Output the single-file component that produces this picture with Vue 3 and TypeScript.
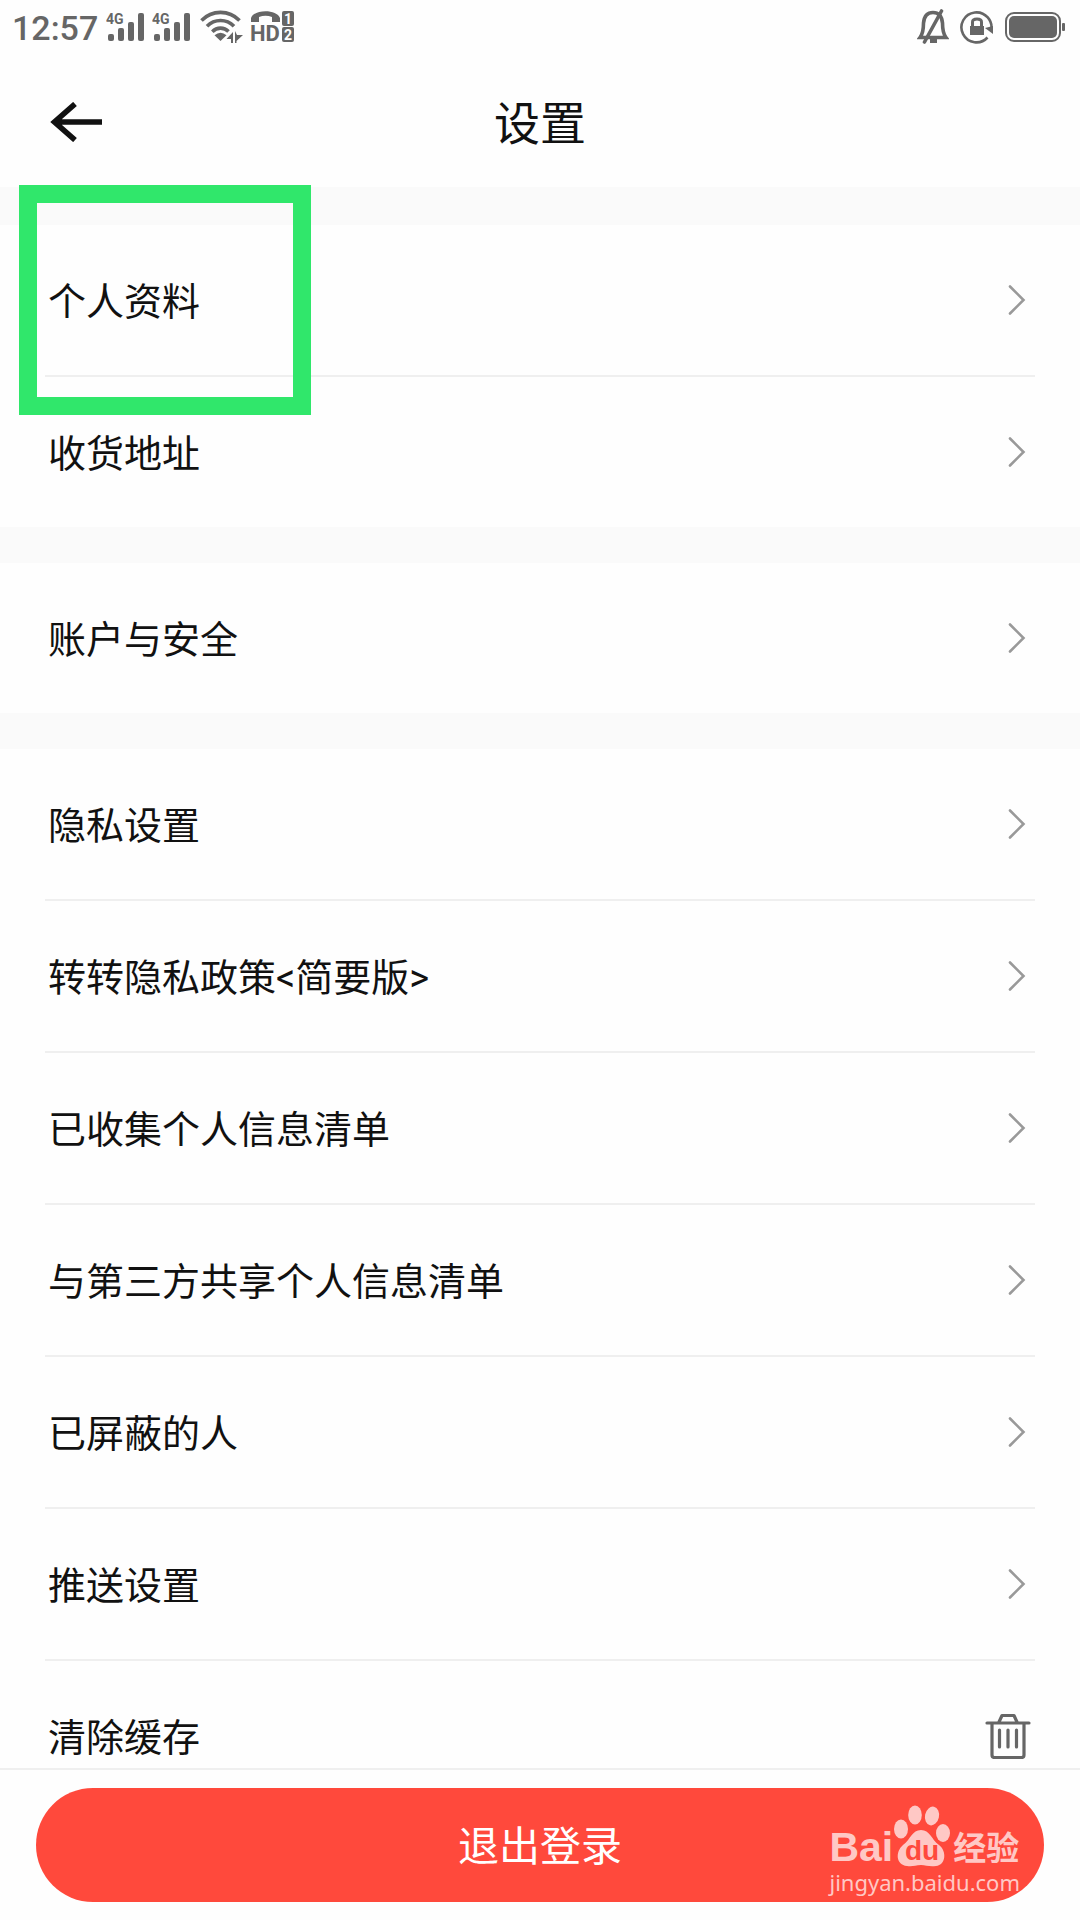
<script setup lang="ts">
interface Item {
  label: string
  icon: 'chevron' | 'trash'
}

const link = (label: string): Item => ({ label, icon: 'chevron' })

const groups: Item[][] = [
  [link('个人资料'), link('收货地址')],
  [link('账户与安全')],
  [
    link('隐私设置'),
    link('转转隐私政策<简要版>'),
    link('已收集个人信息清单'),
    link('与第三方共享个人信息清单'),
    link('已屏蔽的人'),
    link('推送设置'),
    { label: '清除缓存', icon: 'trash' },
  ],
]
</script>

<template>
  <div class="page">
    <div class="status">
      <span class="time">12:57</span>
      <svg v-for="n in 2" :key="n" class="signal" width="40" height="32" viewBox="0 0 40 32" fill="currentColor">
        <text x="0" y="13" class="tiny">4G</text>
        <rect x="2" y="23" width="6" height="7" rx="2" />
        <rect x="12" y="17" width="6" height="13" rx="2" />
        <rect x="22" y="11" width="6" height="19" rx="2" />
        <rect x="32" y="2" width="6" height="28" rx="2" />
      </svg>
      <svg class="wifi" width="44" height="34" viewBox="0 0 44 34" fill="none" stroke="currentColor" stroke-width="3.6">
        <path d="M1.5 10.500C12-.3 29-.3 39.500 10.500M7 16.200C14.500 8.600 26.500 8.600 34 16.200M12.300 21.700C17 17 24 17 28.500 21.500" />
        <path d="M14.500 25.300Q20.500 20.300 26.500 25.300L20.500 31Z" fill="currentColor" stroke="none" />
        <path d="M33 22V33H31V29H26.500ZM35 21V33H36.500V31L43 25H37Z" fill="currentColor" stroke="none" />
      </svg>
      <svg class="hd" width="46" height="42" viewBox="0 -4 46 42" fill="currentColor">
        <path d="M1 12V8C4-1 27-1 30 8V12H22V7Q15.500 4.500 9 7V12Z" />
        <text x="0" y="31" class="hd-text">HD</text>
        <rect x="32" y="1" width="12" height="15" rx="2" />
        <rect x="32" y="17" width="12" height="15" rx="2" />
        <text x="34" y="14" class="sim">1</text>
        <text x="34" y="30" class="sim">2</text>
      </svg>
      <span class="spacer"></span>
      <svg class="bell" width="32" height="36" viewBox="0 0 32 36" fill="none" stroke="currentColor" stroke-width="3.600">
        <path d="M3 28.500Q6.500 24 6.500 14Q7.500 3.500 16 3.500Q24.500 3.500 25.500 14Q25.500 24 29 28.500Z" />
        <path d="M24.500 2L7.500 33" stroke-linecap="round" />
        <path d="M14 31H19V33H14Z" stroke-width="2" />
      </svg>
      <svg class="lock" width="34" height="36" viewBox="0 0 34 36" fill="none" stroke="currentColor" stroke-width="2.600">
        <path d="M31 22A15 15 0 1 0 27.500 28.500" />
        <path d="M25 19L33 17V25Z" fill="currentColor" stroke="none" />
        <rect x="10" y="17" width="14" height="9" fill="currentColor" stroke="none" />
        <path d="M12.500 17V13Q12.500 10 17 10Q21.500 10 21.500 13V17" stroke-width="3" />
      </svg>
      <svg width="62" height="32" viewBox="0 0 62 32" fill="currentColor">
        <rect x="1" y="2" width="54" height="28" rx="8" fill="none" stroke="currentColor" stroke-width="2" />
        <rect x="4" y="5" width="48" height="22" rx="5" />
        <rect x="57" y="12" width="3" height="8" rx="1" />
      </svg>
    </div>

    <header class="header">
      <button type="button" class="back" aria-label="返回">
        <svg width="54" height="40" viewBox="0 0 54 40" fill="none" stroke="currentColor" stroke-width="5.600">
          <path d="M25 2L4.500 20L25 38M4.500 20H52" />
        </svg>
      </button>
      <h1>设置</h1>
    </header>

    <main class="list">
      <ul v-for="(group, g) in groups" :key="g" class="group">
        <li v-for="item in group" :key="item.label">
          <button type="button" class="row">
            <span class="label">{{ item.label }}</span>
            <svg v-if="item.icon === 'chevron'" width="24" height="32" viewBox="0 0 24 32" fill="none" stroke="#999" stroke-width="2.600" stroke-linecap="round">
              <path d="M3 2.500L16.500 16L3 29.500" />
            </svg>
            <svg v-else width="46" height="46" viewBox="0 0 46 46" fill="none" stroke="#666" stroke-width="3.200" stroke-linecap="round" stroke-linejoin="round">
              <path d="M2 10H44M14 9L17 2.500H29L32 9M7 11V42Q7 44.500 9.500 44.500H36.500Q39 44.500 39 42V11M14.500 17V34M23 17V34M31.500 17V34" />
            </svg>
          </button>
        </li>
      </ul>
    </main>

    <footer class="footer">
      <button type="button" class="logout">退出登录</button>
      <div class="mark">
        <div class="brand">
          <span class="bai">Bai</span>
          <svg width="58" height="64" viewBox="0 0 58 64" fill="currentColor">
            <ellipse cx="8" cy="26" rx="7" ry="9.500" />
            <ellipse cx="22" cy="12" rx="6.800" ry="9.500" />
            <ellipse cx="39" cy="13" rx="7" ry="9.500" transform="rotate(12 39 13)" />
            <ellipse cx="50" cy="30" rx="7" ry="9" />
            <path d="M28 27C37 27 38 36 46 42C54 48 53 62 43 63C36 64 33 62 28 62C22 62 20 64 14 63C3 62 2 49 10 42C18 36 19 27 28 27Z" />
            <text x="12" y="57" class="du">du</text>
          </svg>
          <span class="jy">经验</span>
        </div>
        <div class="url">jingyan.baidu.com</div>
      </div>
    </footer>

    <div class="highlight"></div>
  </div>
</template>

<style>
body {
  margin: 0;
  background: #fefefe;
}
</style>

<style scoped>
.page {
  position: relative;
  display: flex;
  flex-direction: column;
  height: 100vh;
  overflow: hidden;
  background: #fefefe;
  color: #111;
  font-family: Roboto, "Noto Sans CJK SC", sans-serif;
}

button {
  margin: 0;
  padding: 0;
  border: 0;
  background: none;
  color: inherit;
  font: inherit;
}

svg {
  display: block;
  flex: none;
}

.status {
  display: flex;
  flex: none;
  align-items: center;
  height: 54px;
  padding: 0 13px 0 12px;
  color: #666;
}

.time {
  width: 94px;
  padding-top: 2px;
  font-size: 34px;
  font-weight: 500;
  line-height: 40px;
}

.signal {
  margin-right: 6px;
}

.tiny {
  font: 700 14px Roboto, sans-serif;
}

.wifi {
  margin: 0 6px 0 2px;
}

.hd-text {
  font: 700 22px Roboto, sans-serif;
}

.sim {
  fill: #fefefe;
  font: 700 14px Roboto, sans-serif;
}

.spacer {
  flex: 1;
}

.bell {
  margin-right: 11px;
}

.lock {
  margin-right: 11px;
}

.header {
  display: flex;
  flex: none;
  align-items: center;
  box-sizing: border-box;
  height: 133px;
  padding: 2px 50px 0;
}

.back {
  width: 54px;
}

h1 {
  flex: 1;
  margin: 0;
  padding: 4px 54px 0 0;
  font-size: 46px;
  font-weight: 400;
  line-height: 68px;
  text-align: center;
}

.list {
  flex: 1;
  min-height: 0;
  overflow-y: auto;
  scrollbar-width: none;
  background: #fafafa;
}

.group {
  margin: 36px 0 0;
  padding: 0 45px;
  background: #fefefe;
  list-style: none;
}

.group:first-child {
  margin-top: 38px;
}

li + li {
  border-top: 2px solid #efefef;
}

.row {
  display: flex;
  align-items: center;
  justify-content: space-between;
  width: 100%;
  height: 150px;
  padding: 0 4px 0 3px;
  font-size: 38px;
  line-height: 56px;
  text-align: left;
}

.label {
  padding-top: 4px;
}

.footer {
  position: relative;
  flex: none;
  padding: 18px 36px;
  border-top: 2px solid #efefef;
  background: #fefefe;
}

.logout {
  display: block;
  width: 100%;
  height: 114px;
  padding-top: 4px;
  border-radius: 57px;
  background: #ff493c;
  color: #fff;
  font-size: 41px;
  line-height: 60px;
}

.mark {
  position: absolute;
  right: 60px;
  bottom: 23px;
  color: #ffc8c5;
}

.brand {
  display: flex;
  align-items: flex-end;
}

.bai {
  font: 700 41px/40px "Liberation Sans", sans-serif;
}

.du {
  fill: #ff493c;
  font: 700 28px "Liberation Sans", sans-serif;
}

.jy {
  margin-left: 2px;
  font-size: 33px;
  font-weight: 700;
  line-height: 36px;
}

.url {
  font: 22px/30px "Noto Sans", sans-serif;
}

.highlight {
  position: absolute;
  top: 185px;
  left: 19px;
  box-sizing: border-box;
  width: 292px;
  height: 230px;
  border: 18px solid #30e76b;
  pointer-events: none;
}
</style>
